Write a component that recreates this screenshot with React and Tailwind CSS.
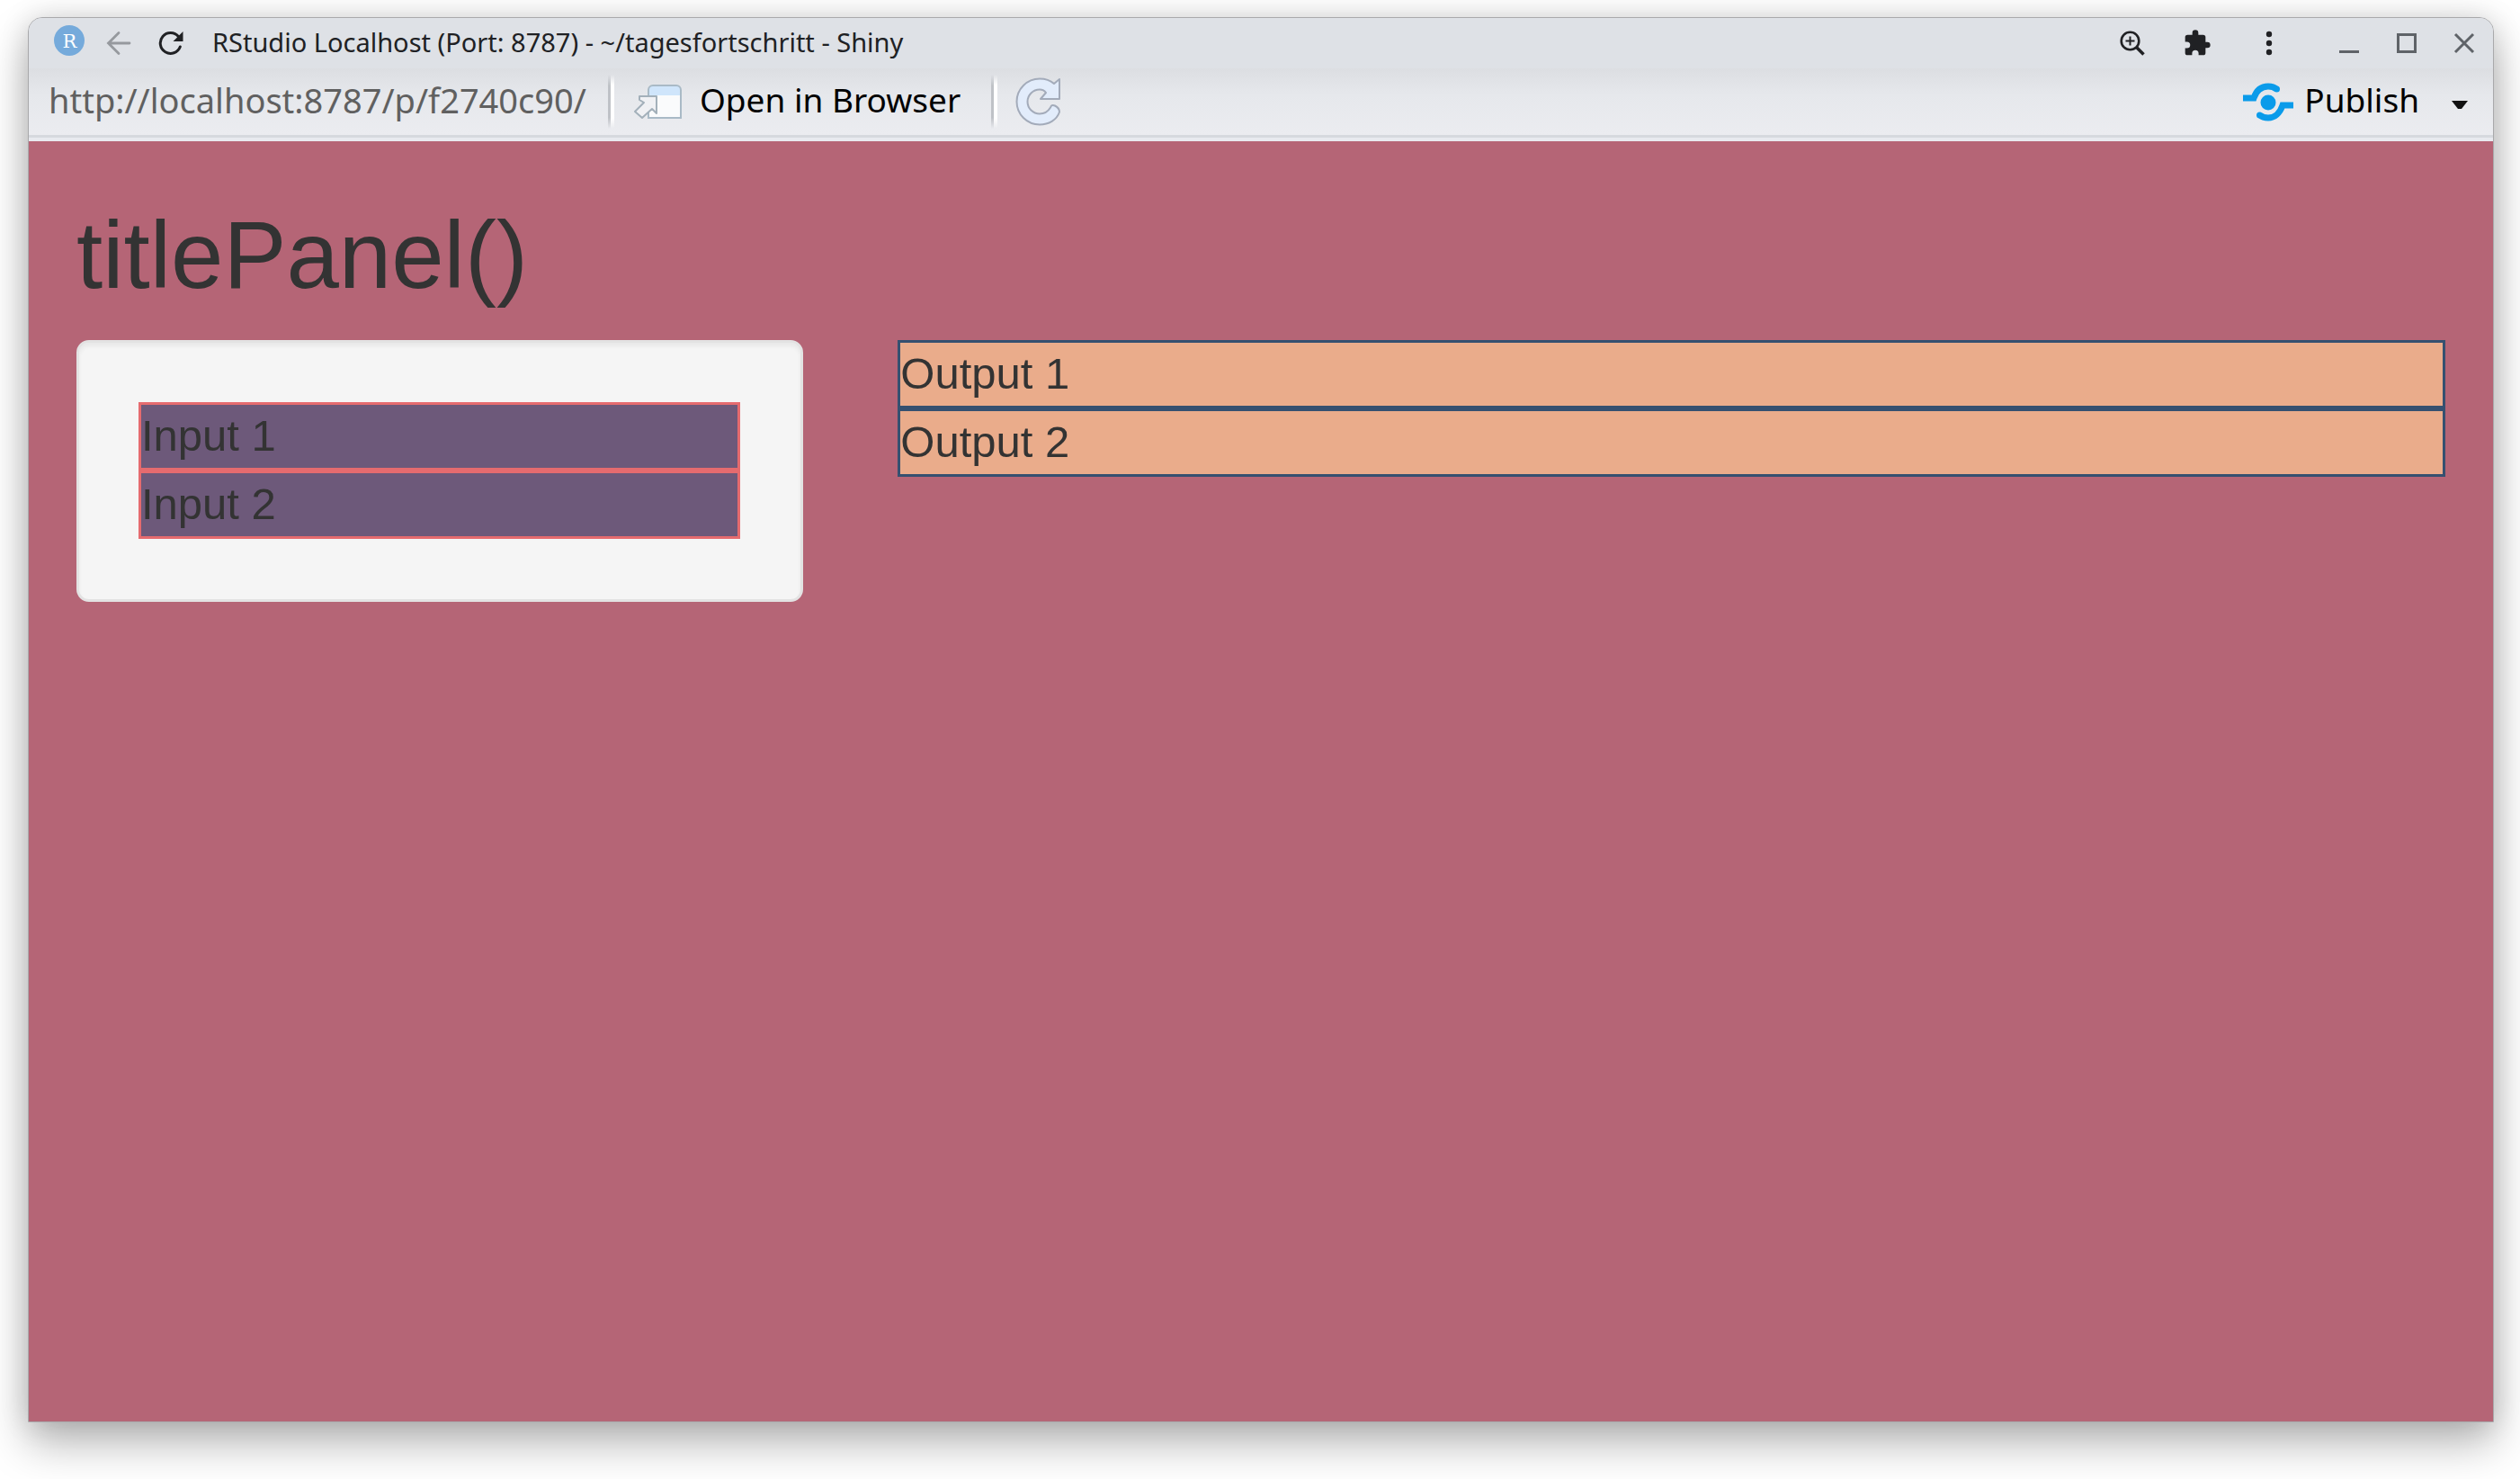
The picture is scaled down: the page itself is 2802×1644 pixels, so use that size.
function Separator() {
  return <span className="h-15 w-[7px] shrink-0 bg-linear-to-r from-[#bfc2c7] from-50% to-white to-50% mask-[linear-gradient(to_bottom,transparent,black_20%,black_80%,transparent)]" />;
}

function TitleBar() {
  return (
    <header className="flex h-14 items-center bg-[#dee1e6] pr-5 pl-7 text-[#202124]">
      <svg className="mt-2 size-[34px] self-start" viewBox="0 0 34 34">
        <circle cx="17" cy="17" r="17" fill="#75aadb" />
        <text x="17.500" y="24.500" textAnchor="middle" fontSize="21" fill="#fff" className="font-['DejaVu_Serif',serif]">R</text>
      </svg>
      <button aria-label="Back" className="ml-6">
        <svg className="size-7" viewBox="0 0 28 28" fill="none" stroke="#96999e" strokeWidth="2.800" strokeLinecap="round">
          <path d="M26 14H2.500M14 2.500 2.500 14 14 25.500" />
        </svg>
      </button>
      <button aria-label="Reload" className="ml-[30px]">
        <svg className="size-7" viewBox="0 0 28 28">
          <path d="M24.300 18A11.400 11.400 0 1 1 22.500 6.800" fill="none" stroke="#202124" strokeWidth="3" strokeLinecap="round" />
          <path d="M27.500 1v11H16.500z" fill="#202124" />
        </svg>
      </button>
      <h1 className="ml-8 pb-0.5 text-[29px] whitespace-nowrap">RStudio Localhost (Port: 8787) - ~/tagesfortschritt - Shiny</h1>
      <div className="ml-auto flex items-center">
        <button aria-label="Zoom">
          <svg className="size-7" viewBox="0 0 28 28" fill="none" stroke="#202124">
            <circle cx="11.500" cy="11.500" r="9.800" strokeWidth="2.600" />
            <path d="M11.500 6.500v10M6.500 11.500h10" strokeWidth="2" />
            <path d="m18.500 18.500 8 8" strokeWidth="3.500" />
          </svg>
        </button>
        <button aria-label="Extensions" className="ml-[42px]">
          <svg className="size-8" viewBox="0 0 24 24" fill="#202124">
            <path d="M20.500 11H19V7a2 2 0 0 0-2-2h-4V3.500a2.500 2.500 0 0 0-5 0V5H4a2 2 0 0 0-2 2v3.800h1.500a2.700 2.700 0 0 1 0 5.400H2V20a2 2 0 0 0 2 2h3.800v-1.500a2.700 2.700 0 0 1 5.400 0V22H17a2 2 0 0 0 2-2v-4h1.500a2.500 2.500 0 0 0 0-5z" />
          </svg>
        </button>
        <button aria-label="Menu" className="ml-[60px]">
          <svg className="h-7 w-2" viewBox="0 0 8 28" fill="#202124">
            <circle cx="4" cy="4" r="3.200" /><circle cx="4" cy="14" r="3.200" /><circle cx="4" cy="24" r="3.200" />
          </svg>
        </button>
        <button aria-label="Minimize" className="ml-[73px]">
          <svg className="size-6" viewBox="0 0 24 24"><path d="M1 21.500h22" stroke="#5f6368" strokeWidth="3" /></svg>
        </button>
        <button aria-label="Maximize" className="ml-10">
          <svg className="size-6" viewBox="0 0 24 24"><path d="M2.500 2.500h19v19h-19z" fill="none" stroke="#5f6368" strokeWidth="3" /></svg>
        </button>
        <button aria-label="Close" className="ml-10">
          <svg className="size-6" viewBox="0 0 24 24"><path d="m2 2 20 20M22 2 2 22" stroke="#5f6368" strokeWidth="3" /></svg>
        </button>
      </div>
    </header>
  );
}

function Toolbar() {
  return (
    <nav className="flex h-[77px] items-center border-b-3 border-[#d6d9de] bg-linear-to-b from-[#dcdee2] via-[#e6e8ec] via-40% to-[#ebecf0] pr-7 pl-[22px] text-[37px] text-black">
      <a href="http://localhost:8787/p/f2740c90/" className="mr-6 pb-1 text-[38px] whitespace-nowrap text-[#606060]">http://localhost:8787/p/f2740c90/</a>
      <Separator />
      <button className="mr-[34px] ml-5 flex items-center whitespace-nowrap">
        <svg className="h-10 w-[55px]" viewBox="0 0 55 40">
          <path d="M18 38V7a5 5 0 0 1 5-5h26a5 5 0 0 1 5 5v31z" fill="#fafbfc" />
          <path d="M18 13V7a5 5 0 0 1 5-5h26a5 5 0 0 1 5 5v6z" fill="#cfe5fb" />
          <path d="M18 38V7a5 5 0 0 1 5-5h26a5 5 0 0 1 5 5v31z" fill="none" stroke="#a9bac6" strokeWidth="2" />
          <path d="M8 14h19v19l-5-5-11 10-8-7 10-10-5-3z" fill="#f0f1f4" stroke="#a3b0ba" strokeWidth="2" strokeLinejoin="round" />
        </svg>
        <span className="ml-5 pb-1">Open in Browser</span>
      </button>
      <Separator />
      <button aria-label="Refresh" className="ml-5">
        <svg className="h-[54px] w-[52px]" viewBox="0 0 52 54">
          <path d="M43 7 49 2v22H28l6-7C32 14 30 13.500 27 13.500a13.500 13.500 0 0 0 0 27c6 0 9-2 12-7 1-3 3-3 5-2 4 2 5 4 5 7-3 9-12 14-22 14A25.500 25.500 0 0 1 27 1.500c6 0 12 2 16 5.500z" fill="#e2ecfb" stroke="#a3abba" strokeWidth="2" strokeLinejoin="round" />
        </svg>
      </button>
      <button className="ml-auto flex items-center">
        <svg className="h-[43px] w-14" viewBox="0 0 56 43" fill="none" stroke="#0a9bea" strokeWidth="7">
          <path d="M0 17h12c3-9 9-13 16-13 4 0 7 1 9 3M56 25H44c-3 9-9 14-16 14-4 0-7-1-9-3" />
          <circle cx="28" cy="22" r="8.500" fill="#0a9bea" stroke="none" />
          <g fill="#0a9bea" stroke="none"><circle cx="37.500" cy="7" r="3.500" /><circle cx="18.500" cy="36" r="3.500" /></g>
        </svg>
        <span className="ml-3 pb-1">Publish</span>
      </button>
      <button aria-label="Publish options" className="mt-2 ml-9">
        <svg className="h-[10px] w-[18px]" viewBox="0 0 18 10"><path d="M0 0h18L11 9H7z" fill="#111" /></svg>
      </button>
    </nav>
  );
}

function Cells({ items, className }) {
  return items.map((item) => (
    <div key={item} className={className}>{item}</div>
  ));
}

export default function App() {
  return (
    <div className="flex min-h-screen flex-col bg-white pt-[19px] pr-[29px] pb-[63px] pl-[31px] font-['Noto_Sans',sans-serif]">
      <div className="flex flex-1 flex-col overflow-hidden rounded-t-2xl border border-[#a9a9ab] bg-[#e8eaef] shadow-[0_24px_48px_#00000047,0_0_32px_#00000024]">
        <TitleBar />
        <Toolbar />
        <main className="mt-1 flex-1 bg-[#b56576] pt-[69px] font-['Liberation_Sans',sans-serif] text-[#333]">
          <h2 className="px-[53px] text-[105px] leading-[115px]">titlePanel()</h2>
          <div className="mt-[37px] grid grid-cols-3 items-start text-[49px] leading-[68px]">
            <aside className="mr-[52px] ml-[53px] rounded-[14px] border-3 border-[#e3e3e3] bg-[#f5f5f5] pt-[66px] pr-[67px] pb-[67px] pl-[66px] shadow-[inset_0_4px_4px_rgba(0,0,0,0.05)]">
              <Cells items={["Input 1", "Input 2"]} className="border-3 border-[#e56b6f] bg-[#6d597a] pb-0.5" />
            </aside>
            <section className="col-span-2 mx-[53px]">
              <Cells items={["Output 1", "Output 2"]} className="border-3 border-[#355070] bg-[#eaac8b] pb-0.5" />
            </section>
          </div>
        </main>
      </div>
    </div>
  );
}
